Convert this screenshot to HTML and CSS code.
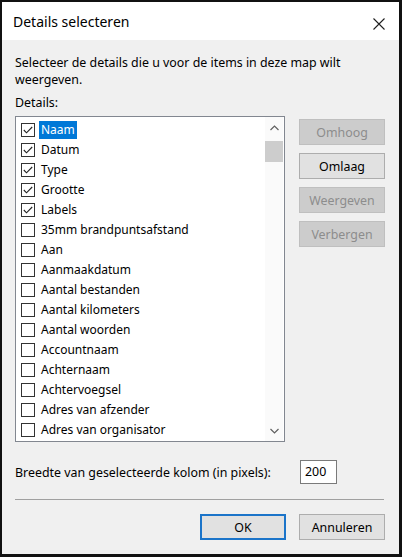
FILE: index.html
```html
<!DOCTYPE html>
<html lang="nl">
<head>
<meta charset="utf-8">
<title>Details selecteren</title>
<link rel="stylesheet" href="styles.css">
</head>
<body>
<div class="window">
  <div class="titlebar">
    <span class="title">Details selecteren</span>
    <svg class="close" width="12" height="12" viewBox="0 0 12 12"><path d="M0.5 0.5 L11.5 11.5 M11.5 0.5 L0.5 11.5" stroke="#1e1e1e" stroke-width="1.1" fill="none"/></svg>
  </div>
  <div class="body">
    <p class="desc">Selecteer de details die u voor de items in deze map wilt weergeven.</p>
    <div class="label">Details:</div>
    <div class="main">
      <div class="list">
        <div class="rows">
          <div class="row"><span class="cb checked"><svg viewBox="0 0 14 14"><path d="M2.8 7 L5.5 9.8 L11.2 4" stroke="#222" stroke-width="1.1" fill="none"/></svg></span><span class="txt sel">Naam</span></div>
          <div class="row"><span class="cb checked"><svg viewBox="0 0 14 14"><path d="M2.8 7 L5.5 9.8 L11.2 4" stroke="#222" stroke-width="1.1" fill="none"/></svg></span><span class="txt">Datum</span></div>
          <div class="row"><span class="cb checked"><svg viewBox="0 0 14 14"><path d="M2.8 7 L5.5 9.8 L11.2 4" stroke="#222" stroke-width="1.1" fill="none"/></svg></span><span class="txt">Type</span></div>
          <div class="row"><span class="cb checked"><svg viewBox="0 0 14 14"><path d="M2.8 7 L5.5 9.8 L11.2 4" stroke="#222" stroke-width="1.1" fill="none"/></svg></span><span class="txt">Grootte</span></div>
          <div class="row"><span class="cb checked"><svg viewBox="0 0 14 14"><path d="M2.8 7 L5.5 9.8 L11.2 4" stroke="#222" stroke-width="1.1" fill="none"/></svg></span><span class="txt">Labels</span></div>
          <div class="row"><span class="cb"></span><span class="txt">35mm brandpuntsafstand</span></div>
          <div class="row"><span class="cb"></span><span class="txt">Aan</span></div>
          <div class="row"><span class="cb"></span><span class="txt">Aanmaakdatum</span></div>
          <div class="row"><span class="cb"></span><span class="txt">Aantal bestanden</span></div>
          <div class="row"><span class="cb"></span><span class="txt">Aantal kilometers</span></div>
          <div class="row"><span class="cb"></span><span class="txt">Aantal woorden</span></div>
          <div class="row"><span class="cb"></span><span class="txt">Accountnaam</span></div>
          <div class="row"><span class="cb"></span><span class="txt">Achternaam</span></div>
          <div class="row"><span class="cb"></span><span class="txt">Achtervoegsel</span></div>
          <div class="row"><span class="cb"></span><span class="txt">Adres van afzender</span></div>
          <div class="row"><span class="cb"></span><span class="txt">Adres van organisator</span></div>
        </div>
        <div class="scrollbar">
          <div class="arrow"><svg width="9" height="6" viewBox="0 0 9 6"><path d="M0.5 5 L4.5 1 L8.5 5" stroke="#606060" stroke-width="1.2" fill="none"/></svg></div>
          <div class="track"><div class="thumb"></div></div>
          <div class="arrow"><svg width="9" height="6" viewBox="0 0 9 6"><path d="M0.5 1 L4.5 5 L8.5 1" stroke="#606060" stroke-width="1.2" fill="none"/></svg></div>
        </div>
      </div>
      <div class="buttons">
        <button class="btn disabled">Omhoog</button>
        <button class="btn">Omlaag</button>
        <button class="btn disabled">Weergeven</button>
        <button class="btn disabled">Verbergen</button>
      </div>
    </div>
    <div class="width-row">
      <span class="wlabel">Breedte van geselecteerde kolom (in pixels):</span>
      <span class="input">200</span>
    </div>
    <div class="sep"></div>
    <div class="actions">
      <button class="btn default">OK</button>
      <button class="btn">Annuleren</button>
    </div>
  </div>
</div>
</body>
</html>
```
FILE: styles.css
```css
html, body {
  margin: 0;
  padding: 0;
  background: #111;
}
body {
  font-family: "Noto Sans", "Open Sans", sans-serif;
  font-size: 12px;
  color: #000;
}
.window {
  width: 397px;
  height: 552px;
  border-style: solid;
  border-color: #111;
  border-width: 2px 3px 3px 2px;
  background: #f0f0f0;
  display: flex;
  flex-direction: column;
}
.titlebar {
  height: 38px;
  background: #fff;
  display: flex;
  align-items: center;
  justify-content: space-between;
  padding: 0 14px 0 11px;
}
.title {
  font-size: 14px;
  color: #000;
  margin-top: 1px;
}
.close {
  display: block;
  margin-top: 6px;
}
.body {
  flex: 1;
  padding: 14px 14px 0 13px;
  display: flex;
  flex-direction: column;
}
.desc {
  margin: 0;
  font-size: 12.4px;
  line-height: 17px;
  width: 365px;
}
.label {
  margin-top: 6px;
  font-size: 12.4px;
  line-height: 17px;
}
.main {
  margin-top: 5px;
  display: flex;
  gap: 14px;
}
.list {
  width: 269px;
  height: 324px;
  border: 1px solid #828790;
  background: #fff;
  display: flex;
  overflow: hidden;
}
.rows {
  flex: 1;
  padding-top: 3px;
}
.row {
  height: 20px;
  display: flex;
  align-items: center;
  padding-left: 5px;
}
.cb {
  width: 12px;
  height: 12px;
  border: 1px solid #333;
  background: #fff;
  display: block;
}
.cb svg {
  display: block;
  width: 14px;
  height: 14px;
  margin: -1px 0 0 -1px;
}
.txt {
  margin-left: 4px;
  padding: 0 2px;
  line-height: 18px;
}
.txt.sel {
  background: #0078d7;
  color: #fff;
}
.scrollbar {
  width: 18px;
  margin-right: 1px;
  display: flex;
  flex-direction: column;
  background: #fafafa;
}
.arrow {
  height: 21px;
  display: flex;
  align-items: center;
  justify-content: center;
}
.track {
  flex: 1;
  padding-top: 3px;
}
.thumb {
  height: 21px;
  background: #cdcdcd;
}
.buttons {
  padding-top: 3px;
  display: flex;
  flex-direction: column;
  gap: 8px;
}
.btn {
  width: 86px;
  height: 26px;
  font-family: "Noto Sans", "Open Sans", sans-serif;
  font-size: 12.4px;
  color: #000;
  background: #e1e1e1;
  border: 1px solid #adadad;
  padding: 0;
  margin: 0;
}
.btn.disabled {
  background: #cccccc;
  border-color: #bfbfbf;
  color: #8d8d8d;
}
.btn.default {
  border: 2px solid #1b74c9;
}
.width-row {
  margin-top: 18px;
  display: flex;
  align-items: center;
  justify-content: space-between;
  padding-right: 48px;
}
.wlabel {
  font-size: 12.4px;
  line-height: 17px;
}
.input {
  width: 31px;
  height: 22px;
  border: 1px solid #7a7a7a;
  background: #fff;
  line-height: 22px;
  padding-left: 4px;
  box-sizing: content-box;
  font-size: 12.4px;
}
.sep {
  margin-top: 15px;
  height: 1px;
  background: #a0a0a0;
  margin-right: 1px;
}
.actions {
  margin-top: 14px;
  display: flex;
  justify-content: flex-end;
  gap: 13px;
}
```
